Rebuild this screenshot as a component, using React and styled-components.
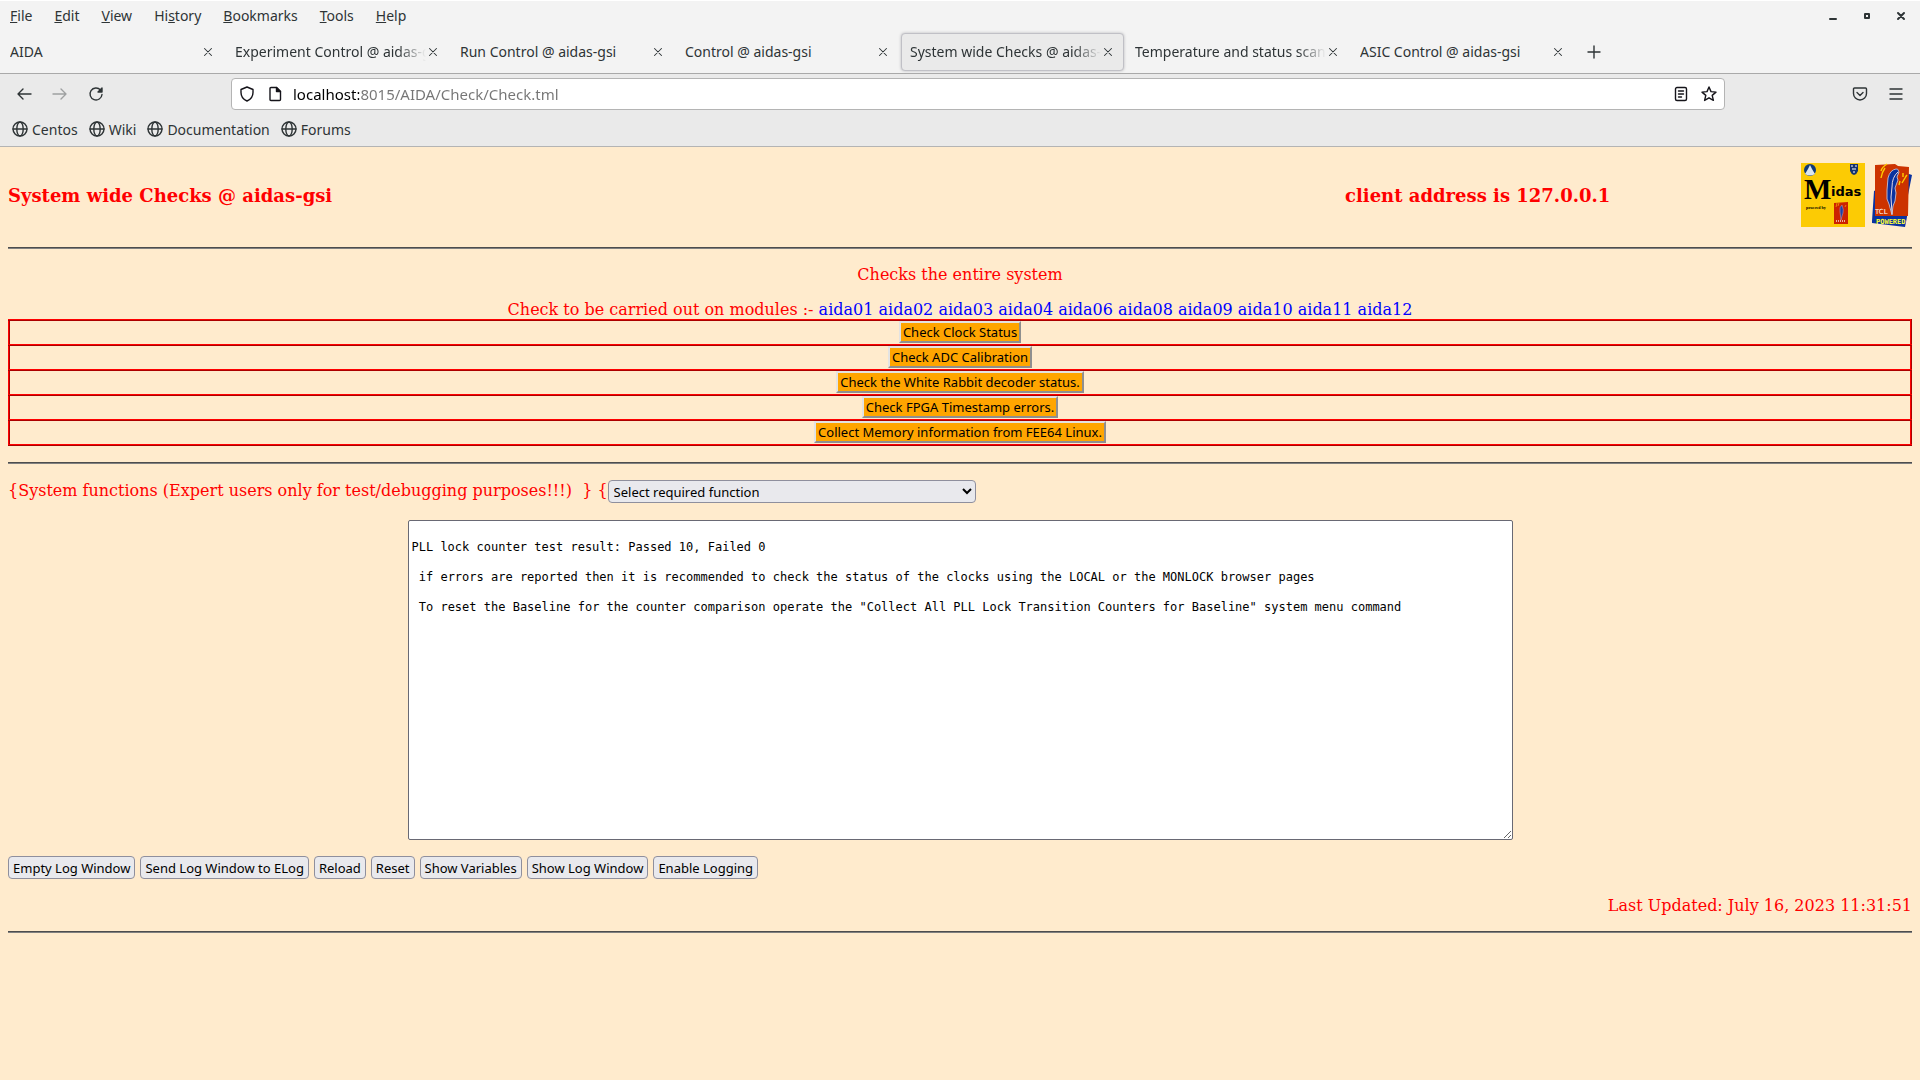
import React from "react";
import styled, { createGlobalStyle } from "styled-components";

const GlobalStyle = createGlobalStyle`
  body {
    margin: 0;
    min-height: 100vh;
    background: #ffebcd;
  }
  * {
    box-sizing: border-box;
  }
`;

const ui = `"Noto Sans", sans-serif`;
const serif = `"DejaVu Serif", serif`;

const Chrome = styled.div`
  font-family: ${ui};
  font-size: 14px;
  color: #2e3436;
  border-bottom: 1px solid #b4b4b4;
`;

const MenuBar = styled.div`
  display: flex;
  justify-content: space-between;
  height: 30px;
  padding-right: 2px;
  background: #f3f3f3;
  border-top: 1px solid #fff;
`;

const Group = styled.div`
  display: flex;
  align-items: center;
`;

const PlainButton = styled.button`
  display: flex;
  align-items: center;
  justify-content: center;
  padding: 0;
  border: 0;
  background: none;
  color: inherit;
  font: inherit;
`;

const MenuItem = styled(PlainButton)`
  display: block;
  padding: 0 12px 0 10px;
  line-height: 28px;
`;

const WindowButton = styled(PlainButton)`
  width: 34px;
  height: 28px;
`;

const TabStrip = styled.div`
  display: flex;
  align-items: center;
  height: 44px;
  padding-left: 1px;
  background: #f3f3f3;
  border-bottom: 1px solid #a9a9a9;
`;

const Tab = styled.div`
  display: flex;
  align-items: center;
  width: 223px;
  height: 38px;
  margin-right: 2px;
  padding: 0 8px;
  border: 1px solid ${props => (props.$active ? "#c0c0c6" : "transparent")};
  border-radius: 4px;
  background: ${props => (props.$active ? "#eaeaea" : "none")};
  box-shadow: ${props => (props.$active ? "0 0 3px #b8b8bc" : "none")};
`;

const TabLabel = styled.span`
  flex: 1;
  overflow: hidden;
  white-space: nowrap;
  mask-image: ${props =>
    props.$fade ? "linear-gradient(to left, transparent, #000 28px)" : "none"};
`;

const TabClose = styled(PlainButton)`
  width: 14px;
  height: 24px;
`;

const NewTab = styled(PlainButton)`
  width: 36px;
  height: 36px;
`;

const NavBar = styled.div`
  display: flex;
  align-items: center;
  height: 40px;
  background: #eaeaea;
`;

const NavButtons = styled(Group)`
  width: 231px;
  padding-left: 6px;
`;

const NavButton = styled(PlainButton)`
  width: 36px;
  height: 32px;
  opacity: ${props => (props.disabled ? 0.4 : 1)};
`;

const UrlBar = styled(Group)`
  flex: 1;
  height: 32px;
  padding: 0 3px;
  gap: 4px;
  background: #fff;
  border: 1px solid #b4b4b4;
  border-radius: 4px;
  color: #15141a;
`;

const UrlButton = styled(PlainButton)`
  width: 24px;
  height: 24px;
`;

// the host part is darker than the rest of the address
const UrlInput = styled.input`
  flex: 1;
  height: 28px;
  padding: 0 0 0 2px;
  border: 0;
  outline: 0;
  background: linear-gradient(to right, #000 68px, #757575 68px);
  background-clip: text;
  color: transparent;
  caret-color: #000;
  font-family: ${ui};
  font-size: 15px;
`;

const NavEnd = styled(Group)`
  width: 195px;
  justify-content: flex-end;
  padding-right: 6px;
`;

const BookmarkBar = styled.nav`
  display: flex;
  align-items: center;
  gap: 11px;
  height: 32px;
  padding: 0 12px 2px;
  background: #eaeaea;
`;

const Bookmark = styled.a`
  display: flex;
  align-items: center;
  gap: 4px;
  color: inherit;
  text-decoration: none;
`;

const Page = styled.main`
  padding: 16px 8px;
  color: #f00;
  font-family: ${serif};
  font-size: 16px;
  line-height: 19px;
`;

const PageHeader = styled.header`
  display: grid;
  grid-template-columns: 1fr 456px auto;
  align-items: center;
  min-height: 66px;
`;

const Title = styled.h3`
  margin: 0;
  font-size: 18px;
  line-height: 22px;
`;

const Logos = styled.div`
  display: flex;
  align-self: start;
  gap: 6px;
`;

const Rule = styled.hr`
  height: 2px;
  margin: ${props => props.$top}px 0 16px;
  border: 0;
  border-top: 1px solid #4d4d4d;
  background: #808080;
`;

const Centered = styled.p`
  margin: 0 0 ${props => props.$gap}px;
  text-align: center;
`;

const ModuleLink = styled.a`
  color: #00f;
  text-decoration: none;
`;

const CheckTable = styled.table`
  width: 100%;
  border-collapse: collapse;
`;

const CheckCell = styled.td`
  height: 25px;
  padding: 0;
  border: 2px ridge #f00;
  text-align: center;
  vertical-align: top;
`;

const CheckButton = styled.button`
  display: block;
  margin: 0 auto;
  padding: 0 2px;
  border: 2px outset #e3e3e3;
  background: #ffa500;
  color: #000;
  font-family: ${ui};
  font-size: 13px;
  line-height: 18px;
`;

const FunctionLine = styled.form`
  display: flex;
  align-items: flex-start;
  margin-bottom: 17px;
  line-height: 21px;
  white-space: pre;
`;

const FunctionSelect = styled.select`
  width: 368px;
  height: 23px;
  padding: 0 1px;
  border: 1px solid #8f8f9d;
  border-radius: 4px;
  background: #e9e9ed;
  color: #000;
  font-family: ${ui};
  font-size: 13px;
`;

const Log = styled.textarea`
  display: block;
  width: 1105px;
  height: 320px;
  margin: 0 auto 16px;
  padding: 4px 3px;
  border: 1px solid #696974;
  border-radius: 2px;
  background: #fff;
  color: #000;
  font-family: "DejaVu Sans Mono", monospace;
  font-size: 12px;
  line-height: 15px;
`;

const Actions = styled.div`
  display: flex;
  gap: 5px;
  margin-bottom: 17px;
`;

const ActionButton = styled.button`
  height: 23px;
  padding: 0 4px;
  border: 1px solid #8f8f9d;
  border-radius: 4px;
  background: #e9e9ed;
  color: #000;
  font-family: ${ui};
  font-size: 13px;
  line-height: 20px;
`;

const Updated = styled.p`
  margin: 0;
  text-align: right;
`;

const menus = [
  ["", "F", "ile"],
  ["", "E", "dit"],
  ["", "V", "iew"],
  ["Hi", "s", "tory"],
  ["", "B", "ookmarks"],
  ["", "T", "ools"],
  ["", "H", "elp"]
];

const tabs = [
  { label: "AIDA" },
  { label: "Experiment Control @ aidas-gsi", fade: true },
  { label: "Run Control @ aidas-gsi" },
  { label: "Control @ aidas-gsi" },
  { label: "System wide Checks @ aidas-gsi", fade: true, active: true },
  { label: "Temperature and status scan @", fade: true },
  { label: "ASIC Control @ aidas-gsi" }
];

const bookmarks = ["Centos", "Wiki", "Documentation", "Forums"];

const modules = ["01", "02", "03", "04", "06", "08", "09", "10", "11", "12"];

const checks = [
  "Check Clock Status",
  "Check ADC Calibration",
  "Check the White Rabbit decoder status.",
  "Check FPGA Timestamp errors.",
  "Collect Memory information from FEE64 Linux."
];

const actions = [
  "Empty Log Window",
  "Send Log Window to ELog",
  "Reload",
  "Reset",
  "Show Variables",
  "Show Log Window",
  "Enable Logging"
];

const logText = `
PLL lock counter test result: Passed 10, Failed 0

 if errors are reported then it is recommended to check the status of the clocks using the LOCAL or the MONLOCK browser pages

 To reset the Baseline for the counter comparison operate the "Collect All PLL Lock Transition Counters for Baseline" system menu command
`;

const Icon = ({ size = 16, children, width = 1.4 }) => (
  <svg
    width={size}
    height={size}
    viewBox="0 0 16 16"
    fill="none"
    stroke="currentColor"
    strokeWidth={width}
    strokeLinecap="round"
    strokeLinejoin="round"
    aria-hidden="true"
  >
    {children}
  </svg>
);

const Globe = () => (
  <Icon>
    <circle cx="8" cy="8" r="7" />
    <ellipse cx="8" cy="8" rx="3.2" ry="7" />
    <path d="M1 8h14" />
  </Icon>
);

const MidasLogo = () => (
  <svg width="64" height="64" viewBox="0 0 64 64" role="img" aria-label="Midas">
    <rect width="64" height="64" fill="#fccb04" />
    <circle cx="9" cy="7" r="6" fill="#103a78" />
    <path d="M9 2l2 4 3 5q-5 3-10 0l3-5z" fill="#dce6ee" />
    <path d="M49 1h8v7q-1 3-4 4q-3-1-4-4z" fill="#16336f" />
    <path d="M50 3h2M54 3h2M51 6h4M52 9h2" stroke="#fff" strokeWidth="1" />
    <text x="3" y="36" fontFamily="Liberation Serif, serif" fontWeight="bold" fontSize="29">M</text>
    <text x="30" y="33" fontFamily="DejaVu Sans, sans-serif" fontWeight="bold" fontSize="13">idas</text>
    <text x="5" y="46" fontFamily="Liberation Serif, serif" fontWeight="bold" fontSize="4">powered by</text>
    <path d="M33 40l14-1v22H33z" fill="#cc2200" />
    <path d="M35 44l1-4M37 43l1-3M44 44l1-2" stroke="#fc0" strokeWidth=".6" />
    <path d="M41 42q-3 2-2 7l1 8q1-4 2-7t-1-8z" fill="#1c3fa8" stroke="#c8a0b0" strokeWidth=".5" />
    <path d="M35 58h10" stroke="#f8e0d0" strokeWidth="1.5" strokeDasharray="1 1" />
  </svg>
);

const TclLogo = () => (
  <svg width="41" height="64" viewBox="0 0 41 64" role="img" aria-label="Tcl powered">
    <path d="M3 28L1 58v2l33 4 2-10 1-22 4-20-3-1z" fill="#0a32a0" />
    <path d="M4 2l20-1 3 2 11 1-1 49H4z" fill="#cc3300" />
    <path
      d="M16 1q-5 3-6 7M14 5q-3 4-4 10M32 14v-4M36 12q-1 1-2 3l-3 5M28 22l1-4"
      fill="none"
      stroke="#ffcc00"
      strokeWidth="1.4"
    />
    <path
      d="M25 6q-6 1-8 9l-1 12v9l2 5 3 11 1-9 2-5 1-8-1-5 3-8-1-3 2-5q-1-4-3-3z"
      fill="#0a32a0"
      stroke="#b9b0c8"
      strokeWidth="1"
    />
    <path d="M27 9q-6 5-6 15l-1 10 1 17" fill="none" stroke="#e6d8e0" strokeWidth="1" />
    <text x="4" y="51" fontFamily="DejaVu Sans, sans-serif" fontSize="7" fill="#fff">TCL</text>
    <text x="5" y="61" fontFamily="DejaVu Sans Mono, monospace" fontWeight="bold" fontSize="7" fill="#ffff33">POWERED</text>
  </svg>
);

const BrowserChrome = () => (
  <Chrome>
    <MenuBar>
      <Group>
        {menus.map(([before, key, after]) => (
          <MenuItem key={after}>
            {before}
            <u>{key}</u>
            {after}
          </MenuItem>
        ))}
      </Group>
      <Group>
        <WindowButton aria-label="Minimize">
          <Icon width={2}><path d="M5 11h6" /></Icon>
        </WindowButton>
        <WindowButton aria-label="Maximize">
          <Icon width={2}><path d="M6 6h4v4H6z" /></Icon>
        </WindowButton>
        <WindowButton aria-label="Close window">
          <Icon width={2}><path d="M5 5l6 6M11 5l-6 6" /></Icon>
        </WindowButton>
      </Group>
    </MenuBar>
    <TabStrip>
      {tabs.map(({ label, fade, active }) => (
        <Tab key={label} $active={active}>
          <TabLabel $fade={fade}>{label}</TabLabel>
          <TabClose aria-label={`Close ${label}`}>
            <Icon size={14} width={1.2}><path d="M4 4l8 8M12 4l-8 8" /></Icon>
          </TabClose>
        </Tab>
      ))}
      <NewTab aria-label="New tab">
        <Icon><path d="M8 2v12M2 8h12" /></Icon>
      </NewTab>
    </TabStrip>
    <NavBar>
      <NavButtons>
        <NavButton aria-label="Back">
          <Icon><path d="M15 8H2M7 3L2 8l5 5" /></Icon>
        </NavButton>
        <NavButton aria-label="Forward" disabled>
          <Icon><path d="M1 8h13M9 3l5 5-5 5" /></Icon>
        </NavButton>
        <NavButton aria-label="Reload page">
          <Icon>
            <path d="M12.5 4A6 6 0 1 0 14 8.5" />
            <path d="M14 2v4h-4z" fill="currentColor" />
          </Icon>
        </NavButton>
      </NavButtons>
      <UrlBar>
        <UrlButton aria-label="Tracking protection">
          <Icon><path d="M8 1l6 2.5v3q0 6-6 8.500q-6-2.500-6-8.500v-3z" /></Icon>
        </UrlButton>
        <UrlButton aria-label="Site information">
          <Icon>
            <path d="M3 2.500q0-1 1-1h5.500l4 4v8q0 1-1 1H4q-1 0-1-1z" />
            <path d="M9.500 1.500v4h4z" fill="currentColor" />
          </Icon>
        </UrlButton>
        <UrlInput
          aria-label="Address"
          spellCheck={false}
          defaultValue="localhost:8015/AIDA/Check/Check.tml"
        />
        <UrlButton aria-label="Reader view">
          <Icon>
            <rect x="2.500" y="1.500" width="11" height="13" rx="1.500" />
            <path d="M5.500 5h5M5.500 8h5M5.500 11h3" />
          </Icon>
        </UrlButton>
        <UrlButton aria-label="Bookmark this page">
          <Icon>
            <path d="M8 1l2 4.600 5 .5-3.800 3.300 1.200 5L8 11.800l-4.400 2.600 1.200-5L1 6.100l5-.5z" />
          </Icon>
        </UrlButton>
      </UrlBar>
      <NavEnd>
        <NavButton aria-label="Save to Pocket">
          <Icon>
            <path d="M2.500 2h11q1 0 1 1v4.500a6.500 6.500 0 0 1-13 0V3q0-1 1-1z" />
            <path d="M5 6.500l3 3 3-3" />
          </Icon>
        </NavButton>
        <NavButton aria-label="Application menu">
          <Icon><path d="M2 3h12M2 8h12M2 13h12" /></Icon>
        </NavButton>
      </NavEnd>
    </NavBar>
    <BookmarkBar>
      {bookmarks.map(name => (
        <Bookmark key={name} href="#">
          <Globe />
          {name}
        </Bookmark>
      ))}
    </BookmarkBar>
  </Chrome>
);

export default function App() {
  return (
    <>
      <GlobalStyle />
      <BrowserChrome />
      <Page>
        <PageHeader>
          <Title>System wide Checks @ aidas-gsi</Title>
          <Title>client address is 127.0.0.1</Title>
          <Logos>
            <MidasLogo />
            <TclLogo />
          </Logos>
        </PageHeader>
        <Rule $top={18} />
        <Centered $gap={16}>Checks the entire system</Centered>
        <Centered $gap={0}>
          Check to be carried out on modules :-
          {modules.map(id => (
            <React.Fragment key={id}>
              {" "}
              <ModuleLink href="#">aida{id}</ModuleLink>
            </React.Fragment>
          ))}
        </Centered>
        <CheckTable>
          <tbody>
            {checks.map(label => (
              <tr key={label}>
                <CheckCell>
                  <CheckButton>{label}</CheckButton>
                </CheckCell>
              </tr>
            ))}
          </tbody>
        </CheckTable>
        <Rule $top={16} />
        <FunctionLine>
          <label htmlFor="system-function">
            {"{System functions (Expert users only for test/debugging purposes!!!)  } {"}
          </label>
          <FunctionSelect id="system-function">
            <option>Select required function</option>
          </FunctionSelect>
        </FunctionLine>
        <Log aria-label="Log window" defaultValue={logText} />
        <Actions>
          {actions.map(label => (
            <ActionButton key={label}>{label}</ActionButton>
          ))}
        </Actions>
        <Updated>Last Updated: July 16, 2023 11:31:51</Updated>
        <Rule $top={16} />
      </Page>
    </>
  );
}
